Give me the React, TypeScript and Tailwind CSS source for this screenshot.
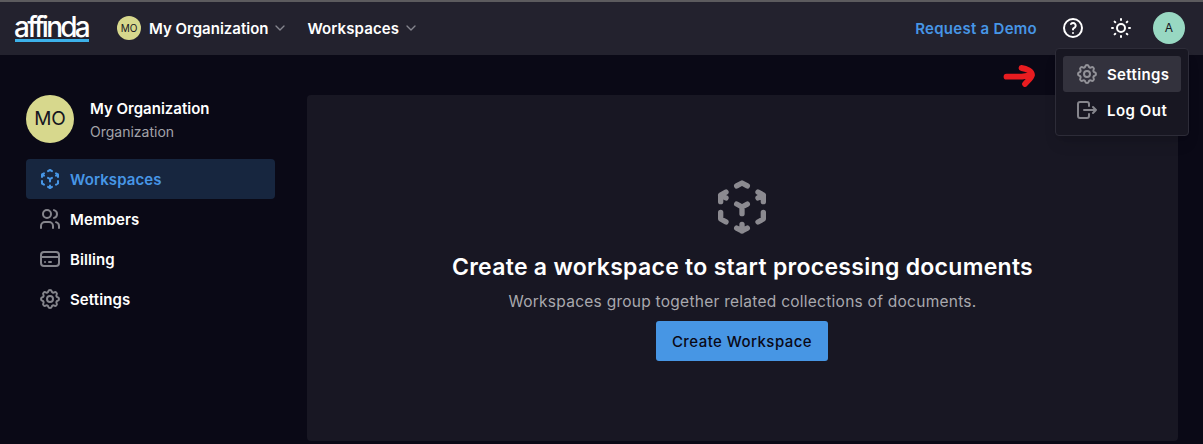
import type { ReactNode } from "react";

type IconProps = { className?: string; children: ReactNode };

function Icon({ className = "size-6", children }: IconProps) {
  return (
    <svg
      viewBox="0 0 24 24"
      fill="none"
      stroke="currentColor"
      strokeWidth="2"
      strokeLinecap="round"
      strokeLinejoin="round"
      className={`shrink-0 ${className}`}
    >
      {children}
    </svg>
  );
}

const CubeIcon = ({ className }: { className?: string }) => (
  <Icon className={className}>
    <path d="M6 17.6l-2-1.1V14M4 10V7.5l2-1.1M10 4.1L12 3l2 1.1M18 6.4l2 1.1V10M20 14v2.5l-2 1.12M14 19.9L12 21l-2-1.1M12 12l2-1.1M18 8.6l2-1.1M12 12v2.5M12 18.5V21M12 12l-2-1.12M6 8.6L4 7.5" />
  </Icon>
);

const GearIcon = () => (
  <Icon>
    <path d="M10.325 4.317c.426-1.756 2.924-1.756 3.35 0a1.724 1.724 0 0 0 2.573 1.066c1.543-.94 3.31.826 2.37 2.37a1.724 1.724 0 0 0 1.065 2.572c1.756.426 1.756 2.924 0 3.35a1.724 1.724 0 0 0-1.066 2.573c.94 1.543-.826 3.31-2.37 2.37a1.724 1.724 0 0 0-2.572 1.065c-.426 1.756-2.924 1.756-3.35 0a1.724 1.724 0 0 0-2.573-1.066c-1.543.94-3.31-.826-2.37-2.37a1.724 1.724 0 0 0-1.065-2.572c-1.756-.426-1.756-2.924 0-3.35a1.724 1.724 0 0 0 1.066-2.573c-.94-1.543.826-3.31 2.37-2.37 1 .608 2.296.07 2.572-1.065z" />
    <circle cx="12" cy="12" r="3" />
  </Icon>
);

const UsersIcon = () => (
  <Icon>
    <circle cx="9" cy="7" r="4" />
    <path d="M3 21v-2a4 4 0 0 1 4-4h4a4 4 0 0 1 4 4v2M16 3.13a4 4 0 0 1 0 7.75M21 21v-2a4 4 0 0 0-3-3.85" />
  </Icon>
);

const CardIcon = () => (
  <Icon>
    <rect x="3" y="5" width="18" height="14" rx="3" />
    <path d="M3 10h18M7 15h.01M11 15h2" />
  </Icon>
);

const LogoutIcon = () => (
  <Icon>
    <path d="M14 8V6a2 2 0 0 0-2-2H5a2 2 0 0 0-2 2v12a2 2 0 0 0 2 2h7a2 2 0 0 0 2-2v-2M9 12h12l-3-3M18 15l3-3" />
  </Icon>
);

const HelpIcon = () => (
  <Icon>
    <circle cx="12" cy="12" r="9" />
    <path d="M12 17v.01M12 13.5a1.5 1.5 0 0 1 1-1.5 2.6 2.6 0 1 0-3-4" />
  </Icon>
);

const SunIcon = () => (
  <Icon>
    <circle cx="12" cy="12" r="4" />
    <path d="M3 12h1M12 3v1M20 12h1M12 20v1M5.6 5.6l.7.7M18.4 5.6l-.7.7M17.7 17.7l.7.7M6.3 17.7l-.7.7" />
  </Icon>
);

const ChevronIcon = () => (
  <Icon className="size-4 text-[#85858e]">
    <path d="M6 9l6 6 6-6" />
  </Icon>
);

type NavItemProps = { icon: ReactNode; label: string; active?: boolean };

function NavItem({ icon, label, active = false }: NavItemProps) {
  return (
    <a
      className={`flex h-10 items-center gap-2 rounded px-3 font-semibold ${
        active ? "bg-[#17263f] text-[#4796e6]" : "text-white"
      }`}
    >
      <span className={active ? "text-[#4796e6]" : "text-[#85858c]"}>{icon}</span>
      <span className="pt-0.5 tracking-[0.1px]">{label}</span>
    </a>
  );
}

export default function App() {
  return (
    <div className="flex h-[444px] w-[1203px] flex-col overflow-hidden bg-[#0a0916] font-['Inter','Liberation_Sans',sans-serif] text-[15px] text-white">
      <header className="flex h-[55px] shrink-0 items-center border-t-2 border-[#5c5b5e] bg-[#23222e] pr-[18px] pb-px pl-[15px]">
        <div className="mb-0.5 flex h-[30px] w-[74px] items-end border-b-[3px] border-[#3db2ea]">
          <span className="-ml-px text-[28px] leading-[23px] font-medium tracking-[-2.75px]">affinda</span>
        </div>
        <div className="ml-7 flex items-center">
          <span className="flex size-6 items-center justify-center rounded-full bg-[#d7d88d] text-[10px] text-[#15151f]">MO</span>
          <span className="ml-2 pt-0.5 font-semibold">My Organization</span>
          <span className="ml-1"><ChevronIcon /></span>
        </div>
        <div className="ml-[19px] flex items-center">
          <span className="pt-0.5 font-semibold tracking-[0.1px]">Workspaces</span>
          <span className="ml-1"><ChevronIcon /></span>
        </div>
        <div className="ml-auto flex items-center">
          <a className="pt-0.5 font-semibold tracking-[0.28px] text-[#4796e6]">Request a Demo</a>
          <span className="ml-6"><HelpIcon /></span>
          <span className="ml-6"><SunIcon /></span>
          <div className="relative ml-5">
            <span className="flex size-8 items-center justify-center rounded-full bg-[#98d8c2] text-xs text-[#15151f]">A</span>
            <div className="absolute top-9 -right-[4px] h-[88px] w-[134px] rounded border border-[#2d2c38] bg-[#181722] p-[7px] font-semibold shadow-lg">
              <div className="flex h-9 items-center gap-2 rounded-[3px] bg-[#33323d] px-3">
                <span className="text-[#929298]"><GearIcon /></span>
                <span className="pt-0.5 tracking-[0.35px]">Settings</span>
              </div>
              <div className="flex h-9 items-center gap-2 px-3">
                <span className="text-[#85858c]"><LogoutIcon /></span>
                <span className="pt-0.5 tracking-[0.5px]">Log Out</span>
              </div>
            </div>
            <svg viewBox="0 0 34 24" className="absolute top-[52px] right-[149px] h-6 w-[34px]" fill="none" stroke="#e81c20" strokeWidth="5.8" strokeLinecap="round" strokeLinejoin="round">
              <path d="M4.5 12.7H20L30 11M19.5 4C24.5 4.5 30 7 30 11C29.5 14 25.5 17 23 20" />
            </svg>
          </div>
        </div>
      </header>
      <div className="flex grow gap-8 pt-10 pr-[25px] pb-[3px] pl-[26px]">
        <aside className="w-[249px] shrink-0">
          <div className="flex h-12 items-center gap-4">
            <span className="flex size-12 items-center justify-center rounded-full bg-[#d7d88d] text-[19px] text-[#15151f]">MO</span>
            <div>
              <div className="pt-px leading-6 font-semibold">My Organization</div>
              <div className="text-sm leading-[22px] text-[#a3a3a9]">Organization</div>
            </div>
          </div>
          <nav className="mt-4">
            <NavItem active icon={<CubeIcon />} label="Workspaces" />
            <NavItem icon={<UsersIcon />} label="Members" />
            <NavItem icon={<CardIcon />} label="Billing" />
            <NavItem icon={<GearIcon />} label="Settings" />
          </nav>
        </aside>
        <main className="flex grow flex-col items-center rounded bg-[#181723] pt-20 pr-px">
          <CubeIcon className="size-16 text-[#8b8a90]" />
          <h1 className="mt-3 pl-px text-[23px] leading-8 font-semibold tracking-[0.29px] whitespace-nowrap">Create a workspace to start processing documents</h1>
          <p className="mt-[7px] pl-px text-[15.5px] leading-6 tracking-[0.26px] whitespace-nowrap text-[#a9a9ae]">Workspaces group together related collections of documents.</p>
          <button className="mt-[7px] h-10 w-[172px] rounded-[3px] bg-[#4796e4] pt-0.5 font-medium tracking-[0.45px] text-[#0a0916]">Create Workspace</button>
        </main>
      </div>
    </div>
  );
}
